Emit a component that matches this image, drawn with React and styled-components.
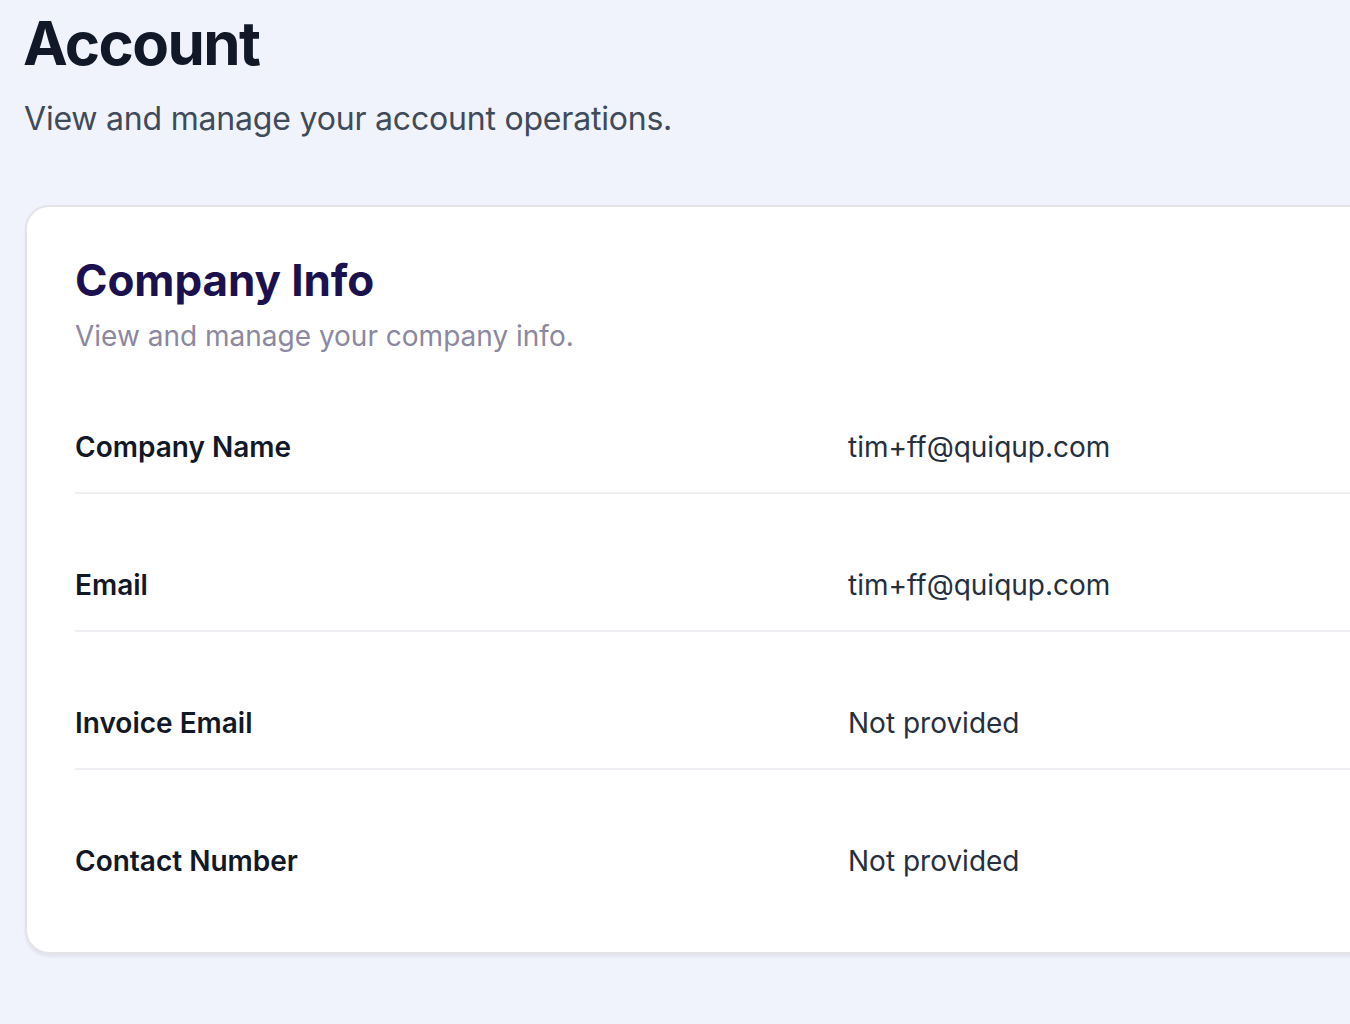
import React from 'react'
import styled, { createGlobalStyle } from 'styled-components'

const GlobalStyle = createGlobalStyle`
  html, body {
    margin: 0;
    padding: 0;
    background: #f0f3fb;
    overflow: hidden;
  }
  body {
    font-family: Inter, "Noto Sans", sans-serif;
    -webkit-font-smoothing: antialiased;
  }
`

// styled
const Page = styled.main`
  display: flex;
  flex-direction: column;
  padding: 7px 0 0 25px;
  min-height: 1024px;
  box-sizing: border-box;
`

const PageTitle = styled.h1`
  margin: 0 0 0 -2px;
  font-size: 60px;
  line-height: 72px;
  font-weight: 700;
  letter-spacing: -1.6px;
  color: #111827;
`

const PageSubtitle = styled.p`
  margin: 18px 0 0 -1px;
  font-size: 32px;
  line-height: 44px;
  letter-spacing: -0.2px;
  color: #3f4a5a;
`

const Card = styled.section`
  margin-top: 64px;
  width: 1600px;
  box-sizing: border-box;
  padding: 47px 48px 46px;
  background: #ffffff;
  border: 2px solid #e3e3e8;
  border-radius: 24px;
  box-shadow: 0 3px 3px rgba(20, 20, 60, 0.06);
`

const CardTitle = styled.h2`
  margin: 0;
  font-size: 44px;
  line-height: 53px;
  font-weight: 700;
  letter-spacing: -0.1px;
  color: #1c114f;
`

const CardSubtitle = styled.p`
  margin: 8px 0 0;
  font-size: 28px;
  line-height: 42px;
  color: #8b889f;
`

const Rows = styled.div`
  display: flex;
  flex-direction: column;
  gap: 46px;
  margin-top: 45px;
`

const Row = styled.div`
  display: grid;
  grid-template-columns: 773px 1fr;
  align-items: center;
  padding: 24px 0;
  border-bottom: ${({ $last }) => ($last ? 'none' : '2px solid #efeff4')};
`

const Label = styled.span`
  font-size: 28px;
  line-height: 42px;
  font-weight: 600;
  color: #111827;
`

const Value = styled.span`
  font-size: 28px;
  line-height: 42px;
  color: #252f3f;
`

const fields = [
  { label: 'Company Name', value: 'tim+ff@quiqup.com' },
  { label: 'Email', value: 'tim+ff@quiqup.com' },
  { label: 'Invoice Email', value: 'Not provided' },
  { label: 'Contact Number', value: 'Not provided' },
]

// markup
const App = () => {
  return (
    <>
      <GlobalStyle />
      <Page>
        <PageTitle>Account</PageTitle>
        <PageSubtitle>View and manage your account operations.</PageSubtitle>
        <Card>
          <CardTitle>Company Info</CardTitle>
          <CardSubtitle>View and manage your company info.</CardSubtitle>
          <Rows>
            {fields.map((f, i) => (
              <Row key={f.label} $last={i === fields.length - 1}>
                <Label>{f.label}</Label>
                <Value>{f.value}</Value>
              </Row>
            ))}
          </Rows>
        </Card>
      </Page>
    </>
  )
}

export default App
